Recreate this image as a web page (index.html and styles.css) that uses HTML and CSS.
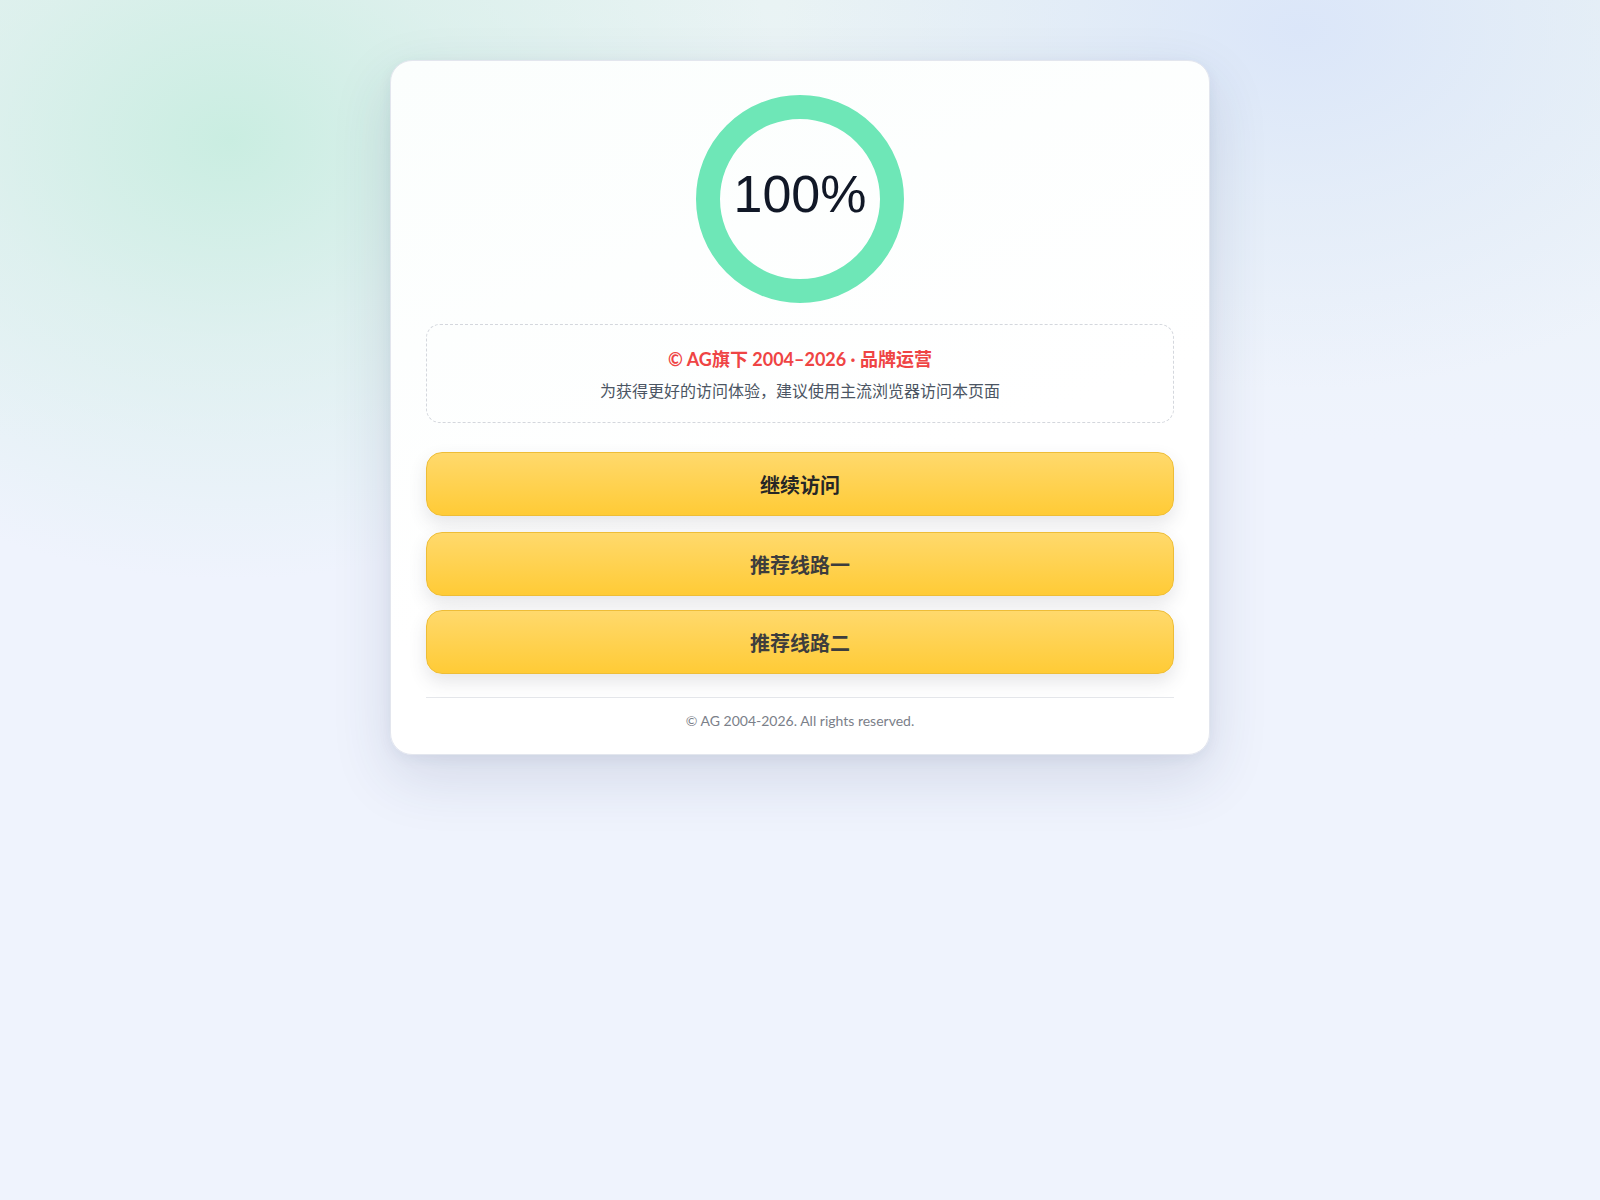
FILE: index.html
```html
<!DOCTYPE html>
<html lang="zh-CN">
    <head>
        <meta charset="UTF-8">
        <meta name="viewport" content="width=device-width, initial-scale=1.0">
        <title>AG 线路检测</title>
        <link rel="stylesheet" href="styles.css">
    </head>
    <body>
        <div class="card">
            <div class="progress">
                <span class="progress-text">100%</span>
            </div>

            <div class="notice">
                <p class="notice-title">© AG旗下 2004–2026 · 品牌运营</p>
                <p class="notice-text">为获得更好的访问体验，建议使用主流浏览器访问本页面</p>
            </div>

            <div class="actions">
                <a class="btn btn-main" href="#">继续访问</a>
                <a class="btn" href="#">推荐线路一</a>
                <a class="btn" href="#">推荐线路二</a>
            </div>

            <div class="footer">© AG 2004-2026. All rights reserved.</div>
        </div>
    </body>
</html>
```

FILE: styles.css
```css
body {
    margin: 0;
    min-height: 1200px;
    font-family: Lato, "Noto Sans", "Noto Sans CJK SC", sans-serif;
    background-color: #eff3fd;
    background-image:
        radial-gradient(ellipse 560px 440px at 230px 140px, rgba(200, 237, 224, 0.95) 0, rgba(210, 238, 230, 0.55) 45%, rgba(239, 243, 253, 0) 100%),
        radial-gradient(ellipse 520px 360px at 1300px 30px, rgba(219, 230, 249, 1) 0, rgba(222, 232, 249, 0.6) 45%, rgba(239, 243, 253, 0) 100%),
        linear-gradient(#e9f3f4, #eff3fd 440px);
    display: flex;
    justify-content: center;
    align-items: flex-start;
    padding-top: 60px;
    box-sizing: border-box;
}

.card {
    width: 820px;
    box-sizing: border-box;
    padding: 34px 35px 23px;
    background: linear-gradient(160deg, #fbfefd, #ffffff 60%);
    border: 1px solid #e3e6ee;
    border-radius: 22px;
    box-shadow: 0 22px 60px rgba(40, 55, 100, 0.14), 0 4px 14px rgba(40, 55, 100, 0.06);
    text-align: center;
}

.progress {
    width: 208px;
    height: 208px;
    margin: 0 auto;
    box-sizing: border-box;
    border: 24px solid #6ee7b7;
    border-radius: 50%;
    display: flex;
    justify-content: center;
    align-items: center;
    padding-bottom: 10px;
}

.progress-text {
    font-family: "Liberation Sans", Arial, sans-serif;
    font-size: 52px;
    color: #111827;
    line-height: 1;
}

.notice {
    margin-top: 21px;
    padding: 21px 20px 19px;
    border: 1px dashed #d4d7dd;
    border-radius: 14px;
}

.notice p {
    margin: 0;
}

.notice-title {
    font-size: 18px;
    font-weight: 700;
    line-height: 26px;
    color: #ef4444;
}

.notice-text {
    margin-top: 7px !important;
    font-size: 16px;
    line-height: 24px;
    color: #4b5563;
}

.actions {
    margin-top: 29px;
    display: flex;
    flex-direction: column;
    gap: 14px;
}

.btn {
    display: flex;
    justify-content: center;
    align-items: center;
    height: 64px;
    box-sizing: border-box;
    border: 1px solid #eebd37;
    border-radius: 16px;
    background: linear-gradient(#ffd96c, #ffcb36);
    box-shadow: 0 8px 18px rgba(60, 60, 80, 0.13);
    color: #3d3d3d;
    font-size: 20px;
    font-weight: 700;
    text-decoration: none;
}

.btn-main {
    color: #262626;
    margin-bottom: 2px;
}

.footer {
    margin-top: 23px;
    padding-top: 13px;
    border-top: 1px solid #e5e7eb;
    font-size: 14px;
    line-height: 20px;
    color: #7b8089;
}
```
